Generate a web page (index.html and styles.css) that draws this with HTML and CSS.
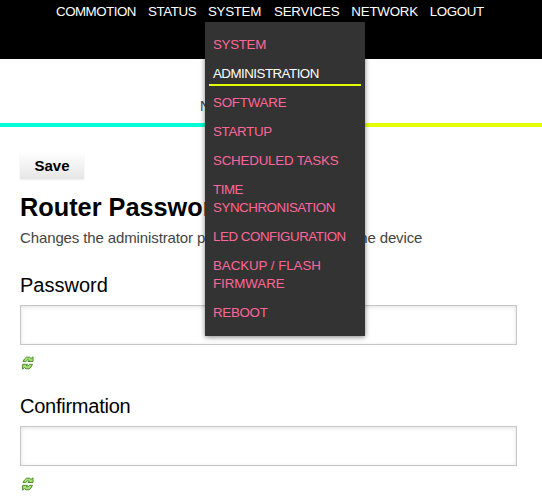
FILE: index.html
```html
<!DOCTYPE html>
<html lang="en">
<head>
<meta charset="utf-8">
<title>Administration</title>
<link rel="stylesheet" href="styles.css">
</head>
<body>
<svg class="defs" width="0" height="0" aria-hidden="true">
  <symbol id="reload" viewBox="0 0 12 14">
    <path d="M1 5.500L2.500 3 4.500 1.200H7.500L9 2.500 11 .8V5.500H6L7.300 4.200 5.500 3.900 3.800 5.500Z" fill="#a6e373" stroke="#4f8c2e"/>
    <path d="M10.500 8.300L9 11 7 12.800H4L2.500 11.500.6 13.200V8.300H5.500L4.200 9.600 6 9.900 7.700 8.300Z" fill="#a6e373" stroke="#4f8c2e"/>
  </symbol>
</svg>
<header class="header">
  <ul class="nav">
    <li>COMMOTION</li>
    <li>STATUS</li>
    <li class="open"><span>SYSTEM</span>
      <ul class="menu">
        <li>SYSTEM</li>
        <li class="active">ADMINISTRATION</li>
        <li class="wide">SOFTWARE</li>
        <li>STARTUP</li>
        <li class="wide">SCHEDULED TASKS</li>
        <li class="tight">TIME SYNCHRONISATION</li>
        <li class="tight">LED CONFIGURATION</li>
        <li class="wider">BACKUP / FLASH FIRMWARE</li>
        <li>REBOOT</li>
      </ul>
    </li>
    <li class="wide">SERVICES</li>
    <li class="wide">NETWORK</li>
    <li>LOGOUT</li>
  </ul>
</header>
<div class="node">N</div>
<div class="stripe"></div>
<main class="content">
  <button class="save">Save</button>
  <h1>Router Password</h1>
  <p class="intro">Changes the administrator password for accessing the device</p>
  <label class="label" for="pw1">Password</label>
  <input class="field" id="pw1" type="password">
  <svg class="reload" width="12" height="14"><use href="#reload"/></svg>
  <label class="label confirm" for="pw2">Confirmation</label>
  <input class="field" id="pw2" type="password">
  <svg class="reload" width="12" height="14"><use href="#reload"/></svg>
</main>
</body>
</html>
```
FILE: styles.css
```css
* { box-sizing: border-box; }
html { overflow: hidden; }
body {
  margin: 0;
  font-family: "Liberation Sans", Arial, sans-serif;
  background: #fff;
  color: #000;
}
ul { list-style: none; margin: 0; padding: 0; }
.defs { display: block; }
.header { height: 59px; background: #000; }
.nav {
  display: flex;
  gap: 12px;
  padding: 3px 0 0 56px;
  font-size: 13.33px;
  line-height: 18px;
  letter-spacing: -0.4px;
  color: #fff;
}
.nav > li:first-child { width: 80px; letter-spacing: -0.5px; }
.nav > li:nth-child(2) { width: 48px; }
.nav > .open { width: 54px; letter-spacing: -0.3px; }
.nav > .wide { letter-spacing: -0.23px; }
.open { position: relative; }
.menu {
  position: absolute;
  top: 19px;
  left: -3px;
  width: 160px;
  padding: 6px 4px 11px;
  background: #333;
  color: #ff6699;
  box-shadow: 0 1px 5px rgba(0, 0, 0, 0.5);
}
.menu li {
  padding: 8px 4px 1px;
  border-bottom: 2px solid transparent;
}
.menu .active { color: #fff; border-color: #e6ff00; letter-spacing: -0.52px; }
.menu .wide { letter-spacing: -0.2px; }
.menu .wider { letter-spacing: -0.06px; }
.menu .tight { letter-spacing: -0.45px; }
.node {
  height: 64px;
  padding: 38px 0 0 200px;
  font-size: 14px;
  line-height: 18px;
  color: #444;
}
.stripe {
  height: 4px;
  background: linear-gradient(90deg, #00ffd5 50%, #e6ff00 50%);
}
.content { padding: 25px 25px 0 20px; }
.save {
  display: block;
  width: 64px;
  height: 27px;
  padding: 0 0 1px;
  border: 0;
  font: bold 15px "Liberation Sans", Arial, sans-serif;
  color: #000;
  background: linear-gradient(#fff, #e6e6e6);
  box-shadow: 0 1px 2px rgba(0, 0, 0, 0.08);
}
h1 { margin: 13px 0 0; font-size: 25.3px; line-height: 30px; }
.intro {
  margin: 7px 0 0;
  font-size: 15px;
  line-height: 18px;
  letter-spacing: -0.12px;
  color: #444;
}
.label {
  display: block;
  margin-top: 26px;
  font-size: 20px;
  line-height: 24px;
}
.field {
  display: block;
  width: 497px;
  height: 40px;
  margin-top: 8px;
  border: 1px solid #c6c6c6;
  background: #fff;
  box-shadow: inset 0 1px 4px rgba(0, 0, 0, 0.12);
}
.reload { display: block; margin: 11px 0 0 2px; }
.confirm { margin-top: 24px; letter-spacing: -0.25px; }
```
